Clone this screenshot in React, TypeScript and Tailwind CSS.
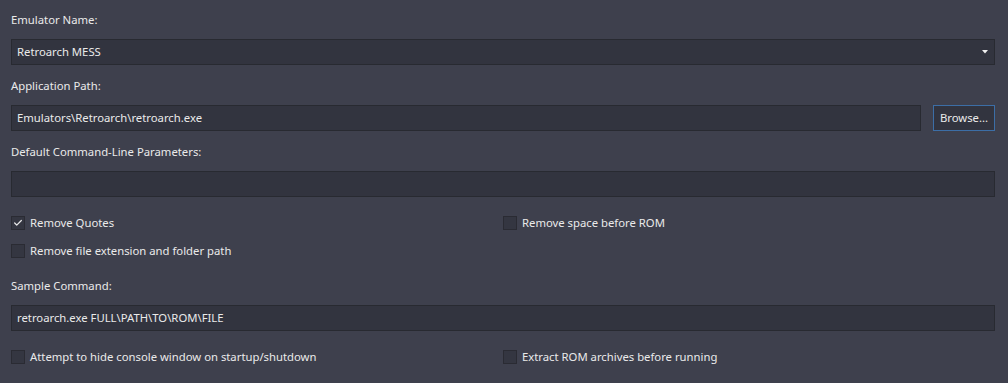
import { Check } from 'lucide-react';

const font = { fontFamily: '"Noto Sans", "Open Sans", sans-serif' };

function Label({ text }: { text: string }) {
  return <div className="h-4 leading-4 mb-[11px]">{text}</div>;
}

function Box({ value, className = '' }: { value?: string; className?: string }) {
  return (
    <div className={`h-[26px] flex items-center pl-[5px] bg-[#32343f] border border-[#282a31] ${className}`}>
      {value}
    </div>
  );
}

function CheckRow({ label, checked = false }: { label: string; checked?: boolean }) {
  return (
    <div className="h-5 flex items-center">
      <div className="w-[14px] h-[14px] bg-[#343641] border border-[#2a2b33] flex items-center justify-center mr-[5px]">
        {checked && <Check className="w-[10px] h-[10px] text-[#e8e8e8]" strokeWidth={3} />}
      </div>
      <span>{label}</span>
    </div>
  );
}

export default function App() {
  return (
    <div
      className="w-[1008px] h-[383px] bg-[#3e404d] text-[#eaeaea] text-[11.3px] pl-[11px] pr-[13px] pt-[12px] overflow-hidden"
      style={font}
    >
      <Label text="Emulator Name:" />
      <div className="h-[26px] flex items-center justify-between pl-[5px] pr-[6px] bg-[#32343f] border border-[#282a31]">
        <span>Retroarch MESS</span>
        <svg width="6" height="4" viewBox="0 0 6 4">
          <path d="M0 0 H6 L3 3.5 Z" fill="#f0f0f0" />
        </svg>
      </div>

      <div className="mt-[13px]">
        <Label text="Application Path:" />
        <div className="flex gap-3">
          <Box value="Emulators\Retroarch\retroarch.exe" className="flex-1" />
          <button className="w-[62px] h-[26px] bg-[#32343f] border border-[#3c6ea6] text-[#eaeaea] flex items-center justify-center">
            Browse...
          </button>
        </div>
      </div>

      <div className="mt-[13px]">
        <Label text="Default Command-Line Parameters:" />
        <Box />
      </div>

      <div className="mt-4 grid grid-cols-[492px_1fr] gap-y-2">
        <CheckRow label="Remove Quotes" checked />
        <CheckRow label="Remove space before ROM" />
        <CheckRow label="Remove file extension and folder path" />
        <div />
      </div>

      <div className="mt-[17px]">
        <Label text="Sample Command:" />
        <Box value="retroarch.exe FULL\PATH\TO\ROM\FILE" />
      </div>

      <div className="mt-4 grid grid-cols-[492px_1fr]">
        <CheckRow label="Attempt to hide console window on startup/shutdown" />
        <CheckRow label="Extract ROM archives before running" />
      </div>
    </div>
  );
}
